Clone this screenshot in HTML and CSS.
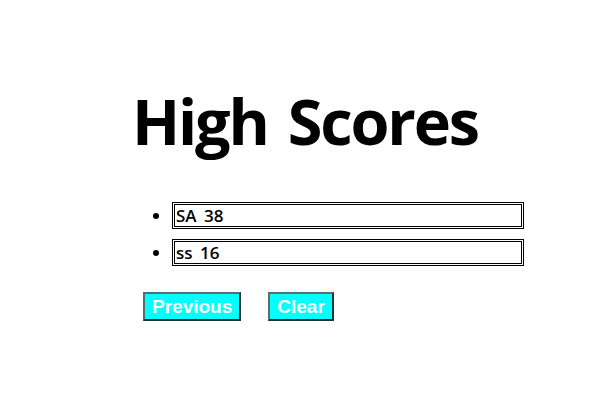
FILE: index.html
```html
<!DOCTYPE html>
<html>
<head>
<meta charset="utf-8">
<link rel="stylesheet" href="styles.css">
</head>
<body>
<main class="page">
  <h1 class="title">High Scores</h1>
  <section class="scores">
    <ul class="score-list">
      <li class="score-item"><div class="score-box">SA 38</div></li>
      <li class="score-item"><div class="score-box">ss 16</div></li>
    </ul>
    <div class="actions">
      <button class="btn">Previous</button>
      <button class="btn">Clear</button>
    </div>
  </section>
</main>
</body>
</html>
```
FILE: styles.css
```css
html, body {
  margin: 0;
  padding: 0;
  background: #fff;
}
.page {
  font-family: "Open Sans", "Noto Sans", sans-serif;
  color: #000;
  padding-top: 89px;
}
.title {
  margin: 0;
  text-align: center;
  font-size: 63px;
  line-height: 1;
  font-weight: 700;
  letter-spacing: -2.2px;
  word-spacing: 6px;
  padding-left: 9px;
}
.scores {
  margin-left: 143px;
  width: 381px;
  padding-top: 50px;
}
.score-list {
  margin: 0;
  padding: 0 0 0 29px;
  list-style: disc;
  display: flex;
  flex-direction: column;
  gap: 10px;
}
.score-item {
  font-size: 17px;
  font-weight: 600;
}
.score-box {
  box-sizing: border-box;
  height: 27px;
  border: 3px double #000;
  padding: 0 1px;
  line-height: 21px;
  word-spacing: 3px;
}
.actions {
  display: flex;
  gap: 27px;
  margin-top: 26px;
}
.btn {
  font-family: "Liberation Sans", Arial, sans-serif;
  font-weight: 700;
  font-size: 19px;
  color: #fff;
  background: #00ffff;
  border: 2px solid;
  border-color: #5a6d6d #1e3232 #1e3232 #5a6d6d;
  padding: 0 7px;
  height: 29px;
  line-height: 25px;
  margin: 0;
}
```
